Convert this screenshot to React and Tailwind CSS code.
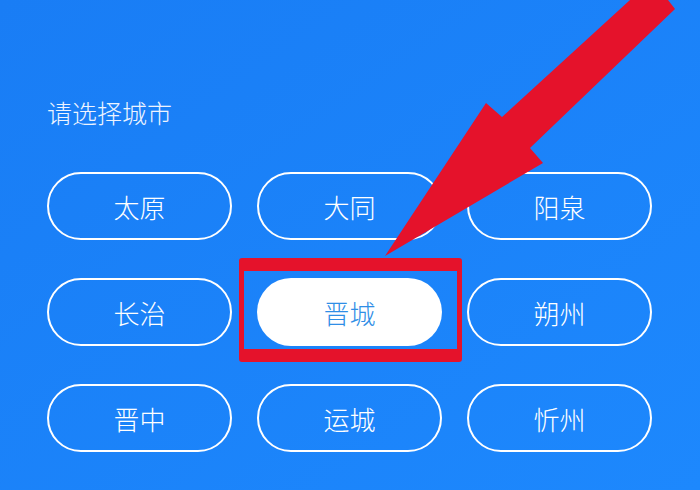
import React from "react";

const cities = ["太原", "大同", "阳泉", "长治", "晋城", "朔州", "晋中", "运城", "忻州"];

function App() {
  return (
    <div
      className="relative w-[700px] h-[490px] overflow-hidden bg-gradient-to-br from-[#197df5] to-[#1d88fd] px-[47px] pt-[94px]"
      style={{ fontFamily: '"Noto Sans CJK SC", "Noto Sans", sans-serif' }}
    >
      <div className="h-[36px] leading-[36px] text-[25px] font-light text-[#eef4ff]">请选择城市</div>

      <div className="mt-[42px] grid grid-cols-[185px_185px_185px] auto-rows-[68px] gap-x-[25px] gap-y-[38px]">
        {cities.map((name) => {
          const active = name === "晋城";
          return (
            <div
              key={name}
              className={
                active
                  ? "flex items-center justify-center rounded-full bg-white text-[26px] font-light text-[#2f8ee6]"
                  : "flex items-center justify-center rounded-full border-2 border-white text-[26px] font-light text-white"
              }
            >
              {name}
            </div>
          );
        })}
      </div>

      {/* red highlight box */}
      <div className="absolute left-[239px] top-[258px] w-[223px] h-[104px] rounded-[3px] border-x-[5px] border-y-[13px] border-[#e5122b]" />

      {/* arrow */}
      <svg className="absolute left-0 top-0" width="700" height="490" viewBox="0 0 700 490">
        <polygon
          points="630,0 668,0 675,9 530,148 543,163 385,256 486,103 502,117"
          fill="#e5122b"
        />
      </svg>
    </div>
  );
}

export default App;
